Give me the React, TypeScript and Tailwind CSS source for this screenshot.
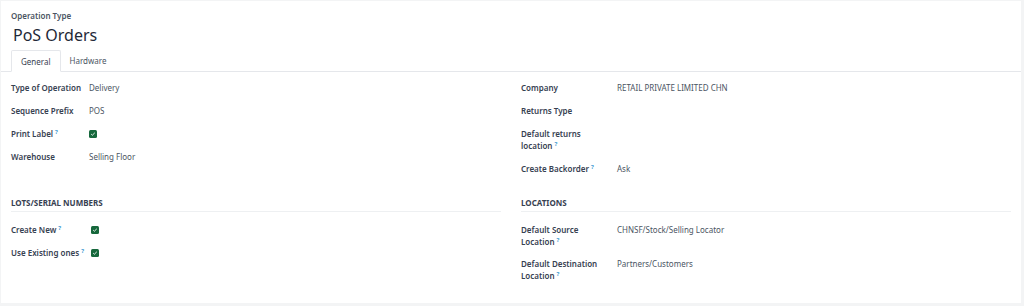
import React from "react";

const Help = () => <sup className="ml-[2px] text-[6px] font-bold text-[#3b9bd1]">?</sup>;

const Check = () => (
  <span className="inline-flex h-[8px] w-[8px] items-center justify-center rounded-[1.5px] bg-[#16683c]">
    <svg viewBox="0 0 8 8" className="h-[6px] w-[6px]">
      <path d="M1.6 4.2 L3.2 5.6 L6.4 2.4" fill="none" stroke="#fff" strokeWidth="1.2" />
    </svg>
  </span>
);

type Row = { label: React.ReactNode; value?: React.ReactNode; help?: boolean; h?: string };

function Field({ row, labelW }: { row: Row; labelW: string }) {
  return (
    <div className={`flex items-start ${row.h ?? "h-[23px]"}`}>
      <div className={`${labelW} shrink-0 font-semibold leading-[12px] text-[#374151]`}>
        {row.label}
        {row.help && <Help />}
      </div>
      <div className="leading-[12px] text-[#4b5563]">{row.value}</div>
    </div>
  );
}

export default function App() {
  const left: Row[] = [
    { label: "Type of Operation", value: "Delivery" },
    { label: "Sequence Prefix", value: "POS" },
    { label: "Print Label", help: true, value: <Check /> },
    { label: "Warehouse", value: "Selling Floor" },
  ];
  const right: Row[] = [
    { label: "Company", value: "RETAIL PRIVATE LIMITED CHN" },
    { label: "Returns Type" },
    { label: <>Default returns<br />location</>, help: true, h: "h-[35px]" },
    { label: "Create Backorder", help: true, value: "Ask" },
  ];
  const lots: Row[] = [
    { label: "Create New", help: true, value: <Check /> },
    { label: "Use Existing ones", help: true, value: <Check /> },
  ];
  const locs: Row[] = [
    { label: <>Default Source<br />Location</>, help: true, value: "CHNSF/Stock/Selling Locator", h: "h-[34px]" },
    { label: <>Default Destination<br />Location</>, help: true, value: "Partners/Customers", h: "h-[34px]" },
  ];

  return (
    <div className="h-[306px] w-[1024px] bg-[#f3f4f5] pt-[1px] pl-[1px] pr-[3px] pb-[3px] text-[8px]" style={{ fontFamily: '"Noto Sans", "Open Sans", sans-serif' }}>
      <div className="h-full w-full bg-white">
        <div className="px-[10px] pt-[9px]">
          <div className="text-[8px] font-semibold leading-[12px] text-[#4b5563]">Operation Type</div>
          <div className="mt-[2px] pl-[2px] text-[16px] leading-[22px] text-[#1f2937]">PoS Orders</div>
        </div>
        <div className="mt-[4px] flex h-[22px] items-end border-b border-[#e5e7eb] px-[10px]">
          <div className="-mb-px flex h-[22px] items-center rounded-t-[2px] border border-b-white border-[#e5e7eb] bg-white px-[9px] pt-[1px] text-[#374151]">General</div>
          <div className="flex h-[22px] items-center px-[9px] pt-[1px] text-[#4b5563]">Hardware</div>
        </div>
        <div className="grid grid-cols-2 gap-x-[20px] px-[10px] pt-[10px]">
          <div>
            {left.map((r, i) => <Field key={i} row={r} labelW="w-[78px]" />)}
          </div>
          <div>
            {right.map((r, i) => <Field key={i} row={r} labelW="w-[96px]" />)}
          </div>
          <div className="mt-[11px]">
            <div className="border-b border-[#eef0f2] pb-[2px] font-bold leading-[12px] text-[#374151]">LOTS/SERIAL NUMBERS</div>
            <div className="pt-[12px]">
              {lots.map((r, i) => <Field key={i} row={r} labelW="w-[80px]" />)}
            </div>
          </div>
          <div className="mt-[11px]">
            <div className="border-b border-[#eef0f2] pb-[2px] font-bold leading-[12px] text-[#374151]">LOCATIONS</div>
            <div className="pt-[12px]">
              {locs.map((r, i) => <Field key={i} row={r} labelW="w-[96px]" />)}
            </div>
          </div>
        </div>
      </div>
    </div>
  );
}
